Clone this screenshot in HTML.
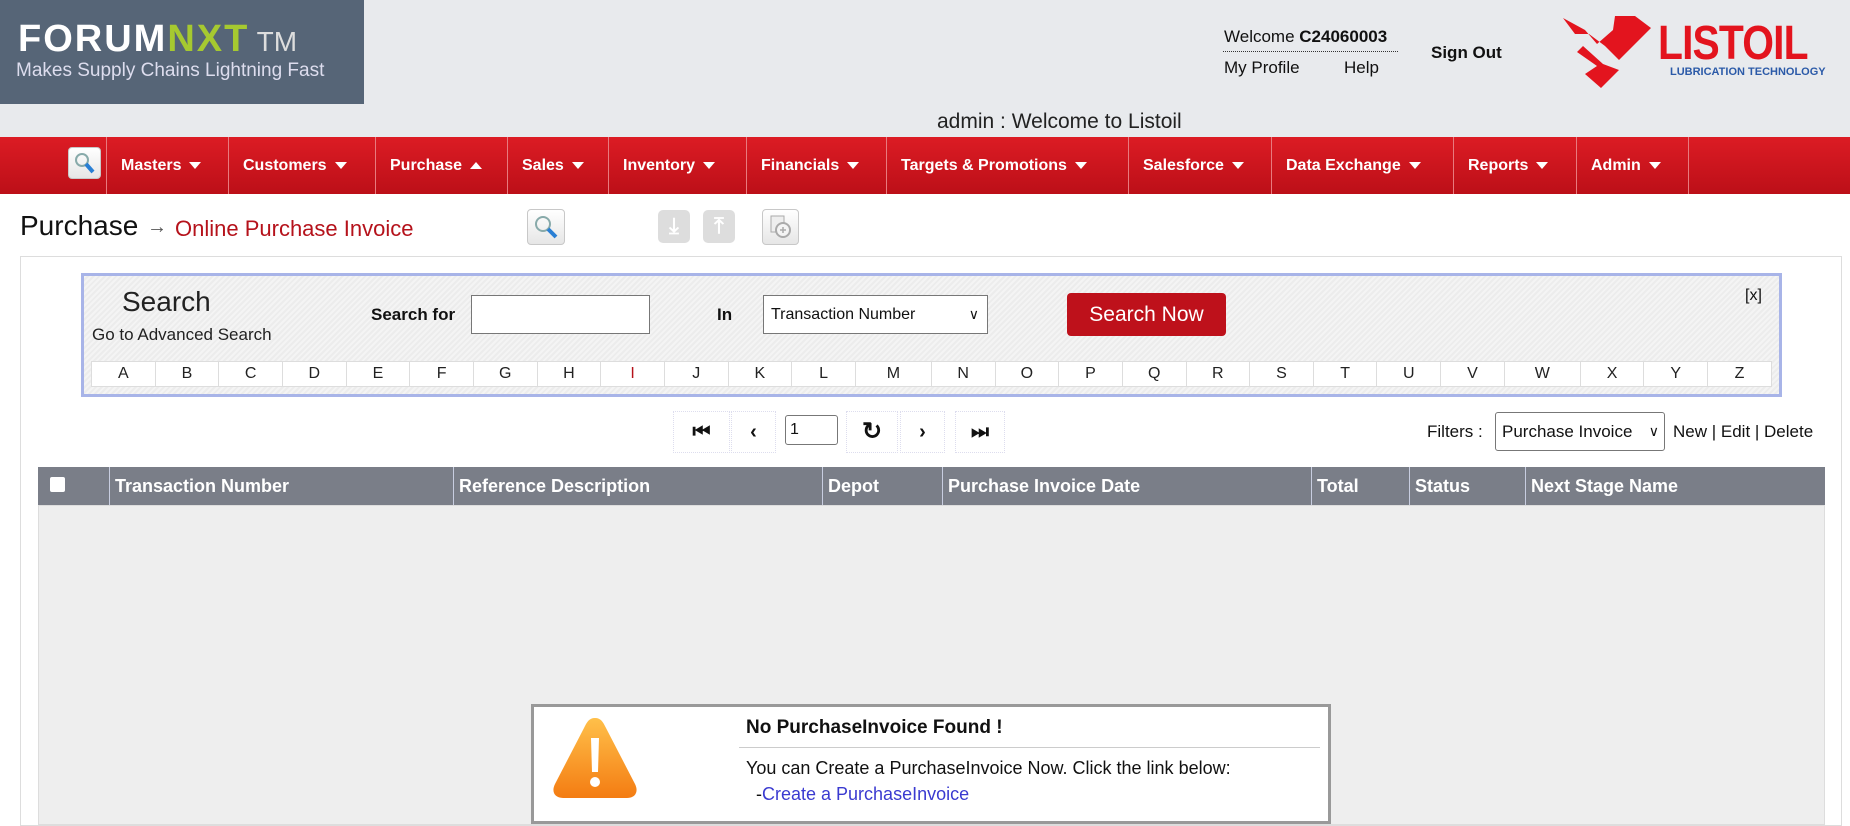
<!DOCTYPE html>
<html><head><meta charset="utf-8"><style>
*{margin:0;padding:0;box-sizing:border-box}
body{width:1850px;height:816px;overflow:hidden;background:#fff;font-family:"Liberation Sans",sans-serif;position:relative;color:#111}
.a{position:absolute;white-space:nowrap}
#hdr{left:0;top:0;width:1850px;height:137px;background:#e8eaed}
#logo{left:0;top:0;width:364px;height:104px;background:#566577}
#nav{left:0;top:137px;width:1850px;height:57px;background:linear-gradient(#dc1c24,#bc0f18)}
.ni{position:absolute;top:0;height:57px;border-left:1px solid #e87a7e;color:#fff;font-weight:bold;font-size:16px;line-height:57px;padding-left:14px}
.tri{display:inline-block;width:0;height:0;border-left:6px solid transparent;border-right:6px solid transparent;border-top:7px solid #fff;margin-left:8px;vertical-align:middle}
.up{border-top:0;border-bottom:7px solid #fff}
.ico{border:1px solid #c8c8c8;border-radius:4px;background:linear-gradient(#fff,#e6e6e6)}
#sbox{left:81px;top:273px;width:1701px;height:124px;border:3px solid #a8b4e8;background:repeating-linear-gradient(135deg,#f4f4f4 0 2px,#ececec 2px 4px)}
table.al{position:absolute;left:91px;top:361px;width:1681px;height:26px;border-collapse:collapse;background:#fff;table-layout:fixed}
table.al td{border:1px solid #ddd;text-align:center;font-size:16px;color:#222}
.th{position:absolute;top:467px;height:38px;border-left:1px solid #c8cde0;color:#fff;font-weight:bold;font-size:18px;line-height:38px;padding-left:5px}
.pb{position:absolute;top:411px;height:42px;border:1px dotted #dde;background:#fff;font-weight:bold;font-size:20px;text-align:center;line-height:40px}
</style></head><body>
<div id="hdr" class="a"></div>
<div id="logo" class="a">
 <div class="a" style="left:18px;top:18px;font-size:38px;font-weight:bold;letter-spacing:2px;color:#fff">FORUM<span style="color:#a6c930">NXT</span><span style="font-weight:normal;font-size:28px;color:#ddd;letter-spacing:0"> TM</span></div>
 <div class="a" style="left:16px;top:60px;font-size:19px;color:#dde">Makes Supply Chains Lightning Fast</div>
</div>
<div class="a" style="left:1224px;top:27px;font-size:17px">Welcome <b>C24060003</b></div>
<div class="a" style="left:1223px;top:51px;width:175px;border-top:1px dotted #333"></div>
<div class="a" style="left:1224px;top:58px;font-size:17px">My Profile</div>
<div class="a" style="left:1344px;top:58px;font-size:17px">Help</div>
<div class="a" style="left:1431px;top:43px;font-size:17px;font-weight:bold">Sign Out</div>
<svg class="a" style="left:1563px;top:16px" width="90" height="72" viewBox="0 0 90 72"><path d="M0 2 L22 14 L34 28 L50 14 L52 0 L72 0 L88 12 L56 44 L42 30 L26 18 L12 18 Z" fill="#e3141e"/><path d="M20 30 L40 48 L56 54 L38 72 L22 58 L34 50 L14 36 Z" fill="#e3141e"/></svg>
<div class="a" style="left:1658px;top:16px;font-size:48px;font-weight:bold;color:#e3141e;letter-spacing:-1px;transform:scaleX(.85);transform-origin:left">LISTOIL</div>
<div class="a" style="left:1670px;top:66px;font-size:11px;font-weight:bold;color:#2b5aa8">LUBRICATION TECHNOLOGY</div>
<div class="a" style="left:937px;top:110px;font-size:21px;color:#222">admin : Welcome to Listoil</div>
<div id="nav" class="a">
 <div class="a ico" style="left:68px;top:10px;width:33px;height:32px"><svg width="31" height="30"><circle cx="13" cy="12" r="6" fill="none" stroke="#8aa" stroke-width="2"/><path d="M17 16 L24 24" stroke="#2a7fd4" stroke-width="4"/></svg></div>
 <div class="ni" style="left:106px;width:122px">Masters<span class="tri"></span></div>
 <div class="ni" style="left:228px;width:147px">Customers<span class="tri"></span></div>
 <div class="ni" style="left:375px;width:132px">Purchase<span class="tri up"></span></div>
 <div class="ni" style="left:507px;width:101px">Sales<span class="tri"></span></div>
 <div class="ni" style="left:608px;width:138px">Inventory<span class="tri"></span></div>
 <div class="ni" style="left:746px;width:140px">Financials<span class="tri"></span></div>
 <div class="ni" style="left:886px;width:242px">Targets &amp; Promotions<span class="tri"></span></div>
 <div class="ni" style="left:1128px;width:143px">Salesforce<span class="tri"></span></div>
 <div class="ni" style="left:1271px;width:182px">Data Exchange<span class="tri"></span></div>
 <div class="ni" style="left:1453px;width:123px">Reports<span class="tri"></span></div>
 <div class="ni" style="left:1576px;width:113px;border-right:1px solid #e87a7e">Admin<span class="tri"></span></div>
</div>
<div class="a" style="left:20px;top:210px;font-size:28px;color:#111">Purchase</div>
<div class="a" style="left:147px;top:216px;font-size:20px;color:#555">&#x2192;</div>
<div class="a" style="left:175px;top:216px;font-size:22px;color:#b5121b">Online Purchase Invoice</div>
<div class="a ico" style="left:527px;top:209px;width:38px;height:36px"><svg width="36" height="34"><circle cx="15" cy="14" r="7" fill="none" stroke="#8aa" stroke-width="2"/><path d="M20 19 L28 27" stroke="#2a7fd4" stroke-width="4"/></svg></div>
<div class="a" style="left:658px;top:210px;width:32px;height:33px;background:#ddd;border-radius:5px;color:#fff;font-size:22px;font-weight:bold;text-align:center;line-height:32px">&#x2913;</div>
<div class="a" style="left:703px;top:210px;width:32px;height:33px;background:#ddd;border-radius:5px;color:#fff;font-size:22px;font-weight:bold;text-align:center;line-height:32px">&#x2912;</div>
<div class="a ico" style="left:762px;top:209px;width:37px;height:36px"><svg width="35" height="34"><rect x="8" y="6" width="13" height="16" fill="#eee" stroke="#aaa"/><circle cx="20" cy="20" r="7" fill="#f4f4f4" stroke="#aaa" stroke-width="2"/><path d="M17 20h6M20 17v6" stroke="#aaa" stroke-width="1.5"/></svg></div>
<div class="a" style="left:20px;top:256px;width:1822px;height:570px;border:1px solid #ddd"></div>
<div id="sbox" class="a"></div>
<div class="a" style="left:122px;top:286px;font-size:28px;color:#222">Search</div>
<div class="a" style="left:92px;top:325px;font-size:17px;color:#222">Go to Advanced Search</div>
<div class="a" style="left:371px;top:305px;font-size:17px;font-weight:bold">Search for</div>
<div class="a" style="left:471px;top:295px;width:179px;height:39px;border:1px solid #777;background:#fff"></div>
<div class="a" style="left:717px;top:305px;font-size:17px;font-weight:bold">In</div>
<div class="a" style="left:763px;top:295px;width:225px;height:39px;border:1px solid #777;background:#fff;font-size:16px;line-height:37px;padding-left:7px">Transaction Number<span style="position:absolute;right:8px;font-size:14px">&#x2228;</span></div>
<div class="a" style="left:1067px;top:293px;width:159px;height:43px;background:#be111b;border-radius:4px;color:#fff;font-size:21px;text-align:center;line-height:43px">Search Now</div>
<div class="a" style="left:1745px;top:287px;font-size:16px">[x]</div>
<table class="al"><colgroup><col span="12"><col style="width:76px"><col span="9"><col style="width:76px"><col span="3"></colgroup><tr><td>A</td><td>B</td><td>C</td><td>D</td><td>E</td><td>F</td><td>G</td><td>H</td><td style="color:#b5121b">I</td><td>J</td><td>K</td><td>L</td><td>M</td><td>N</td><td>O</td><td>P</td><td>Q</td><td>R</td><td>S</td><td>T</td><td>U</td><td>V</td><td>W</td><td>X</td><td>Y</td><td>Z</td></tr></table>
<div class="pb" style="left:673px;width:57px">&#x23EE;</div>
<div class="pb" style="left:731px;width:45px">&#x2039;</div>
<div class="a" style="left:785px;top:415px;width:53px;height:30px;border:1px solid #777;border-radius:3px;font-size:16px;line-height:28px;padding-left:4px">1</div>
<div class="pb" style="left:846px;width:52px;font-size:24px">&#x21BB;</div>
<div class="pb" style="left:900px;width:45px">&#x203A;</div>
<div class="pb" style="left:955px;width:50px">&#x23ED;</div>
<div class="a" style="left:1427px;top:422px;font-size:17px">Filters :</div>
<div class="a" style="left:1495px;top:412px;width:170px;height:39px;border:1px solid #777;border-radius:3px;font-size:17px;line-height:37px;padding-left:6px">Purchase Invoice<span style="position:absolute;right:5px;font-size:14px">&#x2228;</span></div>
<div class="a" style="left:1673px;top:422px;font-size:17px">New | Edit | Delete</div>
<div class="a" style="left:38px;top:467px;width:1787px;height:38px;background:#7a7e88"></div>
<div class="a" style="left:50px;top:477px;width:15px;height:15px;background:#fff;border-radius:2px"></div>
<div class="th" style="left:109px;width:344px">Transaction Number</div>
<div class="th" style="left:453px;width:369px">Reference Description</div>
<div class="th" style="left:822px;width:120px">Depot</div>
<div class="th" style="left:942px;width:369px">Purchase Invoice Date</div>
<div class="th" style="left:1311px;width:98px">Total</div>
<div class="th" style="left:1409px;width:116px">Status</div>
<div class="th" style="left:1525px;width:300px">Next Stage Name</div>
<div class="a" style="left:38px;top:505px;width:1787px;height:320px;background:#eee;border:1px solid #ddd"></div>
<div class="a" style="left:531px;top:704px;width:800px;height:120px;border:3px solid #999;background:#fff"></div>
<svg class="a" style="left:551px;top:714px" width="88" height="86" viewBox="0 0 88 86"><defs><linearGradient id="g" x1="0" y1="0" x2="0" y2="1"><stop offset="0" stop-color="#ffc04a"/><stop offset="1" stop-color="#f47c12"/></linearGradient></defs><path d="M44 4 C50 4 52 8 55 14 L84 70 C88 78 84 84 76 84 L12 84 C4 84 0 78 4 70 L33 14 C36 8 38 4 44 4Z" fill="url(#g)"/><path d="M40 24 h8 l-1 34 h-6z" fill="#fff"/><circle cx="44" cy="68" r="5" fill="#fff"/></svg>
<div class="a" style="left:746px;top:717px;font-size:19px;font-weight:bold">No PurchaseInvoice Found !</div>
<div class="a" style="left:739px;top:747px;width:581px;border-top:1px solid #ccc"></div>
<div class="a" style="left:746px;top:758px;font-size:18px">You can Create a PurchaseInvoice Now. Click the link below:</div>
<div class="a" style="left:756px;top:784px;font-size:18px">-<span style="color:#3a3ad0">Create a PurchaseInvoice</span></div>
</body></html>
